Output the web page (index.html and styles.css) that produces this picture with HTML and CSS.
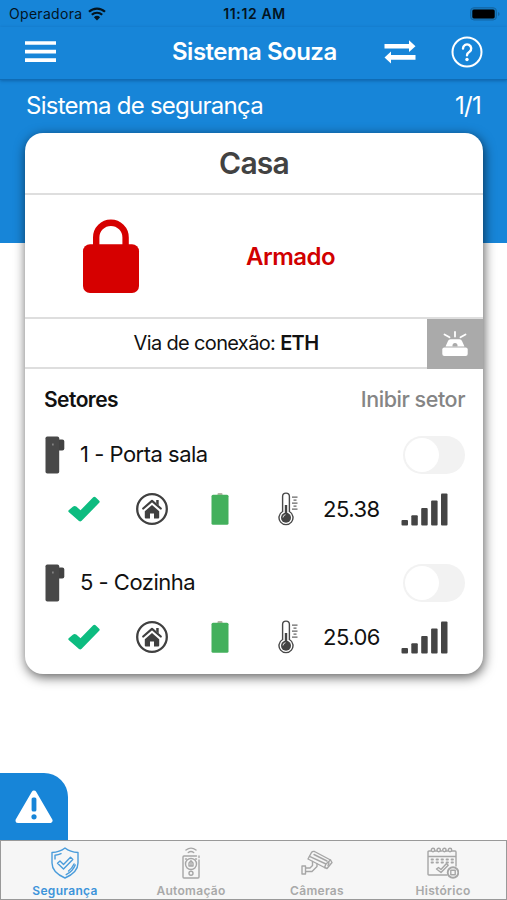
FILE: index.html
```html
<!DOCTYPE html>
<html lang="pt-BR">
<head>
  <meta charset="UTF-8" />
  <meta name="viewport" content="width=device-width, initial-scale=1.0" />
  <title>Sistema Souza</title>
  <link rel="stylesheet" href="styles.css">
</head>
<body>
  <!-- shared by both sectors -->
  <svg class="sprite" width="0" height="0">
    <symbol id="sensor" viewBox="0 0 20 38">
      <rect x="12" y="3.5" width="7.3" height="11" rx="2" fill="#424242" />
      <rect x="0.5" y="0.5" width="13.7" height="37" rx="1.8" fill="#484848" />
      <rect x="7.3" y="7.5" width="1.2" height="2" fill="#999" />
    </symbol>
    <symbol id="check" viewBox="0 0 32 26">
      <path d="M4.8 10.8.7 14.2q-.9.9 0 1.800L11 25q1.200.9 2.400 0L31.200 6.800q1-1 0-2L27.600 1.300q-1.200-1-2.400 0L12.500 14.300 8.300 10.600q-1.800-1.200-3.500.2z" fill="#0dbc80" />
    </symbol>
    <symbol id="home" viewBox="0 0 32 32">
      <circle cx="16" cy="16" r="14.8" fill="none" stroke="#404040" stroke-width="2.3" />
      <path d="M7.2 15.500 16 7.800l8.800 7.700" fill="none" stroke="#404040" stroke-width="2.200" stroke-linecap="round" stroke-linejoin="round" />
      <path d="M20.200 7h2.500v5.500l-2.500-2.200z" fill="#404040" />
      <path d="M16 12 23.200 18.200V24.500q0 1-1 1h-4.200v-5h-4v5H9.800q-1 0-1-1v-6.300z" fill="#404040" />
    </symbol>
    <symbol id="battery" viewBox="0 0 18 32">
      <rect x="6.5" y="0" width="5" height="3" rx="1" fill="#b5b5a5" />
      <rect x="0.5" y="1.8" width="17" height="30" rx="1.5" fill="#43b05c" />
    </symbol>
    <symbol id="thermo" viewBox="0 0 20 34">
      <path d="M4.6 19.5V4.5a3.4 3.4 0 0 1 6.8 0v15a7 7 0 1 1-6.8 0z" fill="#fff" stroke="#484848" stroke-width="1.4" />
      <circle cx="8" cy="25.7" r="5" fill="#444" />
      <path d="M8 13v11" stroke="#444" stroke-width="2.4" />
      <path d="M5 25.5a3 3 0 0 1 2.5-2.8" stroke="#ddd" stroke-width="1" fill="none" />
      <path d="M14 5.2h5.5M15.500 8.200h3M14 11.200h5.500M15.500 14.200h3M14 17.200h5.500" stroke="#666" stroke-width="1.3" />
    </symbol>
    <symbol id="signal" viewBox="0 0 47 33">
      <g fill="#444">
        <rect x="0.5" y="27" width="6.5" height="5.4" rx="1" />
        <rect x="10.3" y="22.3" width="6.5" height="10.1" rx="1" />
        <rect x="20.2" y="15" width="6.5" height="17.4" rx="1" />
        <rect x="30.1" y="7.5" width="6.5" height="24.9" rx="1" />
        <rect x="40" y="0.4" width="6.5" height="32" rx="1" />
      </g>
    </symbol>
  </svg>

  <div class="top">
    <div class="status-bar">
      <div class="carrier">
        <span>Operadora</span>
        <svg width="18" height="14" viewBox="0 0 18 14">
          <path d="M1 4.8a11.6 11.6 0 0 1 16 0M3.8 7.8a7.6 7.6 0 0 1 10.4 0" fill="none" stroke="#03141f" stroke-width="2.2" />
          <path d="M9 13.5 5.9 10.3a4.5 4.5 0 0 1 6.2 0z" fill="#03141f" />
        </svg>
      </div>
      <div class="time">11:12 AM</div>
      <svg class="phone-battery" width="30" height="14" viewBox="0 0 30 14">
        <rect x="0.5" y="0.7" width="26" height="12.3" rx="3.5" fill="#1779bf" stroke="#1367a5" />
        <rect x="2.3" y="2.4" width="22.4" height="9" rx="1.6" fill="#000" />
        <path d="M28 5v4q1.6-.6 1.6-2T28 5z" fill="#1367a5" />
      </svg>
    </div>

    <header>
      <svg class="menu" width="31" height="22" viewBox="0 0 31 22">
        <path d="M0 2h31M0 10.6h31M0 19.2h31" stroke="#fff" stroke-width="3.7" />
      </svg>
      <h1>Sistema Souza</h1>
      <svg class="swap" width="32" height="24" viewBox="0 0 32 24">
        <path d="M0.5 4H25V.3L31.5 6.2 25 12V8.5H.5z M31.5 15H7v-3.5L.5 17.4 7 23.4v-3.7h24.5z" fill="#fff" />
      </svg>
      <svg class="help" width="32" height="32" viewBox="0 0 32 32">
        <circle cx="16" cy="16" r="14.5" fill="none" stroke="#fff" stroke-width="2" />
        <path d="M12 12.5a4.1 4.1 0 1 1 6.5 3.300c-1.800 1.200-2.500 1.700-2.500 3.400" fill="none" stroke="#fff" stroke-width="2.4" stroke-linecap="round" />
        <circle cx="16" cy="23.5" r="1.7" fill="#fff" />
      </svg>
    </header>

    <div class="subtitle">
      <span>Sistema de segurança</span>
      <span>1/1</span>
    </div>
  </div>

  <main class="card">
    <h2>Casa</h2>

    <div class="state">
      <svg class="lock" width="58" height="75" viewBox="0 0 58 75">
        <path d="M14.2 30V18.5a14.7 14.7 0 0 1 29.4 0V30" fill="none" stroke="#d60000" stroke-width="6.4" />
        <rect x="1" y="25.3" width="56" height="48.7" rx="7" fill="#d60000" />
      </svg>
      <strong>Armado</strong>
    </div>

    <div class="connection">
      <div class="via">Via de conexão: <b>ETH</b></div>
      <div class="siren">
        <svg width="28" height="28" viewBox="0 0 28 28">
          <path d="M14 2v4.500M3.500 4.500 8.500 7.300M24.500 4.500l-5 2.800" stroke="#fff" stroke-width="1.8" stroke-linecap="round" />
          <path d="M4.500 16.500 7 11q.6-1.800 2.500-1.800h9q1.900 0 2.500 1.800l2.500 5.500z" fill="#fff" />
          <path d="M11.5 16.500v-1a2.500 2.500 0 0 1 5 0v1z" fill="#aaa" />
          <rect x="1.3" y="17.500" width="25.4" height="8.500" rx="2" fill="#fff" />
        </svg>
      </div>
    </div>

    <div class="sectors">
      <div class="sectors-head">
        <span class="label">Setores</span>
        <span class="inhibit">Inibir setor</span>
      </div>

      <div class="sector">
        <div class="sector-name">
          <svg width="20" height="38"><use href="#sensor" /></svg>
          <span class="name">1 - Porta sala</span>
          <div class="toggle"></div>
        </div>
        <div class="sector-info">
          <svg width="32" height="26"><use href="#check" /></svg>
          <svg width="32" height="32"><use href="#home" /></svg>
          <svg width="18" height="32"><use href="#battery" /></svg>
          <svg width="20" height="34"><use href="#thermo" /></svg>
          <span class="temp">25.38</span>
          <svg width="47" height="33"><use href="#signal" /></svg>
        </div>
      </div>

      <div class="sector">
        <div class="sector-name">
          <svg width="20" height="38"><use href="#sensor" /></svg>
          <span class="name">5 - Cozinha</span>
          <div class="toggle"></div>
        </div>
        <div class="sector-info">
          <svg width="32" height="26"><use href="#check" /></svg>
          <svg width="32" height="32"><use href="#home" /></svg>
          <svg width="18" height="32"><use href="#battery" /></svg>
          <svg width="20" height="34"><use href="#thermo" /></svg>
          <span class="temp">25.06</span>
          <svg width="47" height="33"><use href="#signal" /></svg>
        </div>
      </div>
    </div>
  </main>

  <div class="alert">
    <svg width="38" height="34" viewBox="0 0 38 34">
      <path d="M19 3 35 30.5H3z" fill="#fff" stroke="#fff" stroke-width="5" stroke-linejoin="round" />
      <rect x="16.6" y="7.5" width="4.8" height="14" rx="1.6" fill="#1785d8" />
      <circle cx="19" cy="26.8" r="2.6" fill="#1785d8" />
    </svg>
  </div>

  <nav class="tabs">
    <a class="tab active">
      <svg width="32" height="32" viewBox="0 0 32 32" fill="none" stroke="#4a9cdb" stroke-width="1.4" stroke-linecap="round" stroke-linejoin="round">
        <path d="M16 1c3.5 2.8 8 4.300 13 4.500v10.500c0 6.700-6 12-13 15C9 28 3 22.700 3 16V5.500C8 5.300 12.500 3.800 16 1z" />
        <path d="M8.500 16.200 11 14l3.500 3.400 7-7.200 2.300 2.300-9.300 9.500z" />
        <path d="M6 12V8.200q3.500-.3 6-1.600M26.200 18q-2 5.800-9 9.700M25 17q-2 4.500-5.500 7" />
      </svg>
      <span>Segurança</span>
    </a>
    <a class="tab">
      <svg width="32" height="32" viewBox="0 0 32 32" fill="none" stroke="#a6a6a6" stroke-width="1.4" stroke-linecap="round" stroke-linejoin="round">
        <path d="M11 3q5-3.8 10 0M13.3 5.500q2.700-2 5.400 0" />
        <path d="M24 13v17q0 1-1 1H9q-1 0-1-1V10q0-1 1-1h12.500M24 9v1.500M10.500 12h1M20.500 12h1" />
        <circle cx="16" cy="17" r="5.5" />
        <path d="M14 19v-3l2-2.200 2 2.200v3zM16 16v3" />
        <circle cx="16" cy="26.3" r="2" />
      </svg>
      <span>Automação</span>
    </a>
    <a class="tab">
      <svg width="32" height="32" viewBox="0 0 32 32" fill="none" stroke="#a6a6a6" stroke-width="1.4" stroke-linecap="round" stroke-linejoin="round">
        <path d="M10.5 5.500q1-1.500 3-1L29.500 13 31 15.500l-5 6-2.500-1L7 12z" />
        <path d="M8.500 9.300 25 17l4.500-4M13 7.500l13 6.500M25 17l-1.500 3.500M28 16l-1 2.500" />
        <path d="M11.500 14.500v4l-2.500 2.500H4.500v3.500H11l5-5v-2.500M1 19h3.500v8H1z" />
      </svg>
      <span>Câmeras</span>
    </a>
    <a class="tab">
      <svg width="32" height="32" viewBox="0 0 32 32" fill="none" stroke="#a6a6a6" stroke-width="1.4" stroke-linecap="round" stroke-linejoin="round">
        <path d="M20 28H2q-1 0-1-1V5q0-1 1-1h2M8 4h1.500M13.500 4H15M19 4h1.500M24.500 4H28q1 0 1 1v14M1 9.500h28" />
        <circle cx="6" cy="3" r="1.7" />
        <circle cx="11.7" cy="3" r="1.7" />
        <circle cx="17.4" cy="3" r="1.7" />
        <circle cx="23" cy="3" r="1.7" />
        <path d="M4.500 12.500h21.500M4.500 15.500h21.500" stroke-width="1.8" stroke-dasharray="1.5 3.5" />
        <path d="M9.500 22 11.500 20.500l2.500 2 5.500-6 1.700 1.700L14 25.500z" />
        <circle cx="26" cy="25.5" r="5.3" stroke-width="1.9" />
        <rect x="23.8" y="23.3" width="4.4" height="4.4" />
      </svg>
      <span>Histórico</span>
    </a>
  </nav>
</body>
</html>
```

FILE: styles.css
```css
* {
  box-sizing: border-box;
}

body {
  margin: 0;
  height: 900px;
  display: flex;
  flex-direction: column;
  overflow: hidden;
  background-color: #fff;
  color: #111;
  font-family: Inter, "Liberation Sans", sans-serif;
}

svg {
  display: block;
  flex-shrink: 0;
}

.sprite {
  height: 0;
}

.top {
  height: 243px;
  flex-shrink: 0;
  background-color: #1785d8;
  color: #fff;
}

.status-bar {
  display: grid;
  grid-template-columns: 1fr auto 1fr;
  align-items: center;
  height: 27px;
  padding: 0 7px 0 9px;
  color: #03141f;
  font-size: 14px;
}

.carrier {
  display: flex;
  align-items: center;
  gap: 6px;
  letter-spacing: 0.3px;
}

.time {
  font-weight: 600;
  letter-spacing: 0.6px;
}

.phone-battery {
  justify-self: end;
}

header {
  display: flex;
  align-items: center;
  height: 53px;
  padding: 0 24px 3px 25px;
  border-bottom: 1px solid #0f6cb5;
  box-shadow: 0 1px 3px rgba(0, 40, 90, 0.35);
}

h1 {
  margin: 0 0 0 116px;
  width: 164px;
  white-space: nowrap;
  font-size: 24px;
  font-weight: 600;
  letter-spacing: -0.5px;
}

.swap {
  margin-left: 48px;
}

.help {
  margin-left: auto;
}

.subtitle {
  display: flex;
  justify-content: space-between;
  padding: 11px 26px 0;
  font-size: 24px;
  line-height: 29px;
  letter-spacing: -0.75px;
}

.card {
  height: 541px;
  flex-shrink: 0;
  margin: -110px 24px 0 25px;
  border-radius: 18px;
  background-color: #fff;
  box-shadow: 1px 3px 12px rgba(0, 0, 0, 0.65);
}

h2 {
  margin: 0;
  height: 62px;
  border-bottom: 2px solid #dedede;
  text-align: center;
  font-size: 30px;
  font-weight: 600;
  line-height: 61px;
  letter-spacing: -0.8px;
  color: #424242;
}

.state {
  display: flex;
  align-items: center;
  height: 124px;
  padding-left: 57px;
  border-bottom: 2px solid #dedede;
  color: #d10000;
  font-size: 24px;
}

.state strong {
  margin-left: 106px;
  font-weight: 600;
  letter-spacing: -0.5px;
}

.connection {
  display: flex;
  height: 50px;
}

.via {
  flex: 1;
  border-bottom: 2px solid #dedede;
  text-align: center;
  font-size: 20px;
  line-height: 48px;
  letter-spacing: -0.65px;
}

.via b {
  font-weight: 600;
}

.siren {
  display: flex;
  align-items: center;
  justify-content: center;
  width: 56px;
  background-color: #aaa;
}

.sectors {
  padding: 17px 18px 0 19px;
}

.sectors-head {
  display: flex;
  justify-content: space-between;
  line-height: 28px;
}

.label {
  font-size: 21px;
  font-weight: 600;
  letter-spacing: -0.55px;
}

.inhibit {
  font-size: 21.5px;
  font-weight: 500;
  line-height: 27px;
  letter-spacing: -0.45px;
  color: #858585;
}

.sector {
  height: 128px;
  padding-top: 22px;
}

.sector-name {
  display: flex;
  align-items: center;
  height: 38px;
  padding-left: 1px;
}

.name {
  margin-left: 15px;
  padding-bottom: 2px;
  font-size: 22px;
  line-height: 36px;
  letter-spacing: -0.5px;
}

.toggle {
  display: flex;
  align-items: center;
  width: 62px;
  height: 38px;
  margin-left: auto;
  padding-left: 2px;
  border-radius: 19px;
  background-color: #f2f2f2;
}

.toggle::before {
  content: "";
  width: 34px;
  height: 34px;
  border-radius: 50%;
  background-color: #fff;
}

.sector-info {
  display: grid;
  grid-template-columns: 68px 75px 67px 45px 78px 47px;
  align-items: center;
  height: 34px;
  margin-top: 18px;
  padding-left: 24px;
}

.temp {
  font-size: 22px;
  letter-spacing: -0.5px;
}

.alert {
  display: flex;
  align-items: center;
  justify-content: center;
  width: 68px;
  height: 67px;
  flex-shrink: 0;
  margin-top: auto;
  border-top-right-radius: 24px;
  background-color: #1785d8;
}

.tabs {
  display: grid;
  grid-template-columns: repeat(4, 1fr);
  height: 60px;
  flex-shrink: 0;
  padding-left: 1px;
  border: 1px solid #999;
  background-color: #f6f6f6;
}

.tab {
  display: flex;
  flex-direction: column;
  align-items: center;
  padding-top: 6px;
  color: #a9a9a9;
  font-size: 12px;
  font-weight: 600;
  line-height: 15px;
  letter-spacing: 0.3px;
}

.tab span {
  margin-top: 4px;
}

.tab.active {
  color: #3d94da;
}
```
